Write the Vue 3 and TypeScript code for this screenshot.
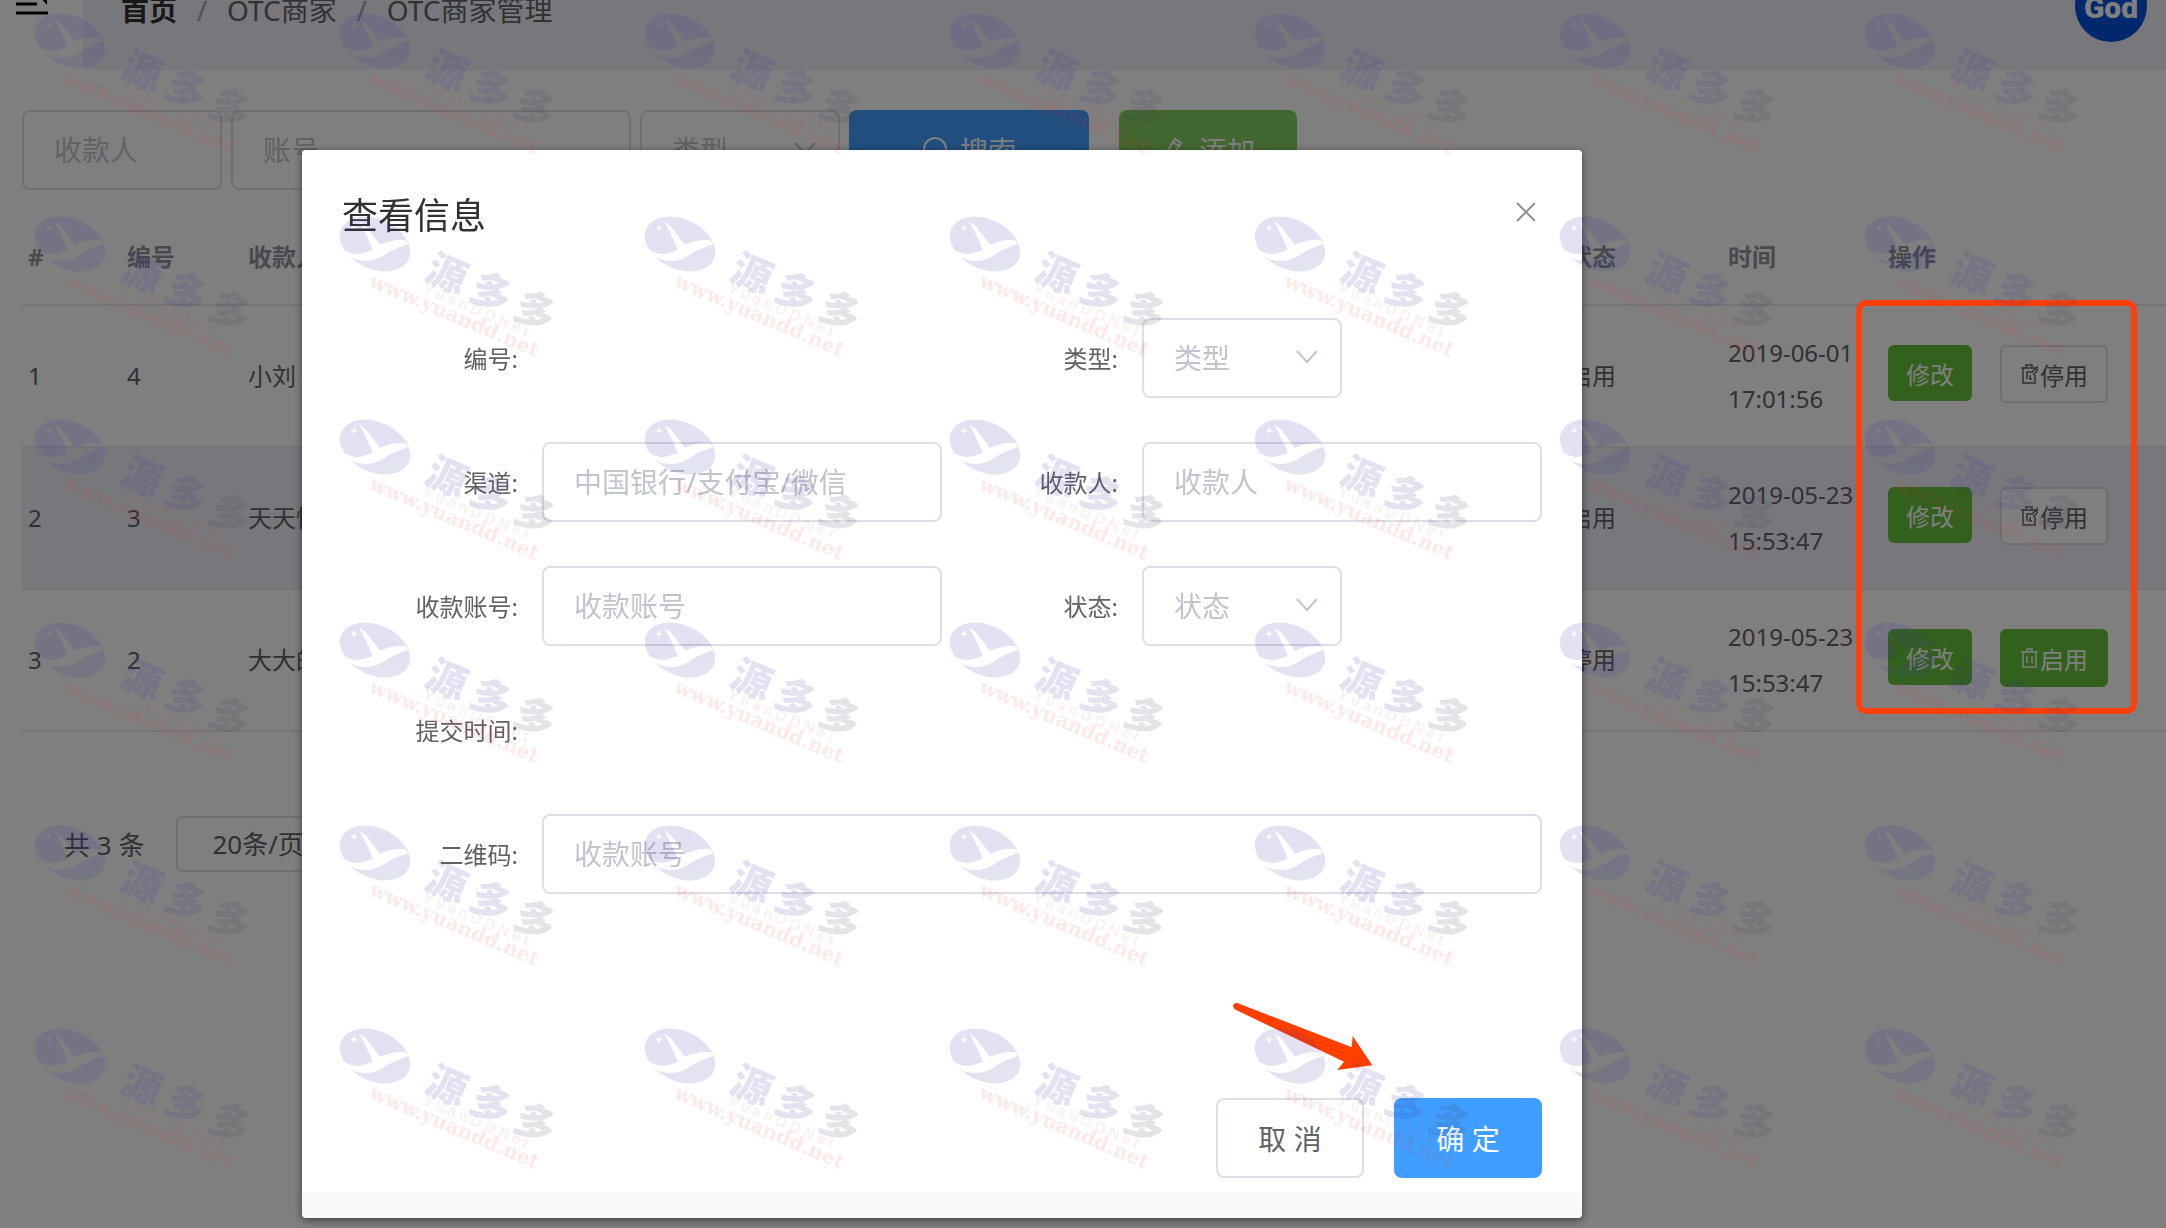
<script setup lang="ts">
import { ref } from 'vue'

interface Merchant {
  id: number
  payee: string
  enabled: boolean
  date: string
  time: string
}

const merchants: Merchant[] = [
  { id: 4, payee: '小刘', enabled: true, date: '2019-06-01', time: '17:01:56' },
  { id: 3, payee: '天天快', enabled: true, date: '2019-05-23', time: '15:53:47' },
  { id: 2, payee: '大大的', enabled: false, date: '2019-05-23', time: '15:53:47' },
]

const filter = ref({ payee: '', account: '' })
const form = ref({ channel: '', payee: '', account: '', qrcode: '' })

const tile = { width: 305, height: 203 }
const marks = Array.from({ length: 42 }, (_, i) => ({
  x: (i % 7) * tile.width,
  y: Math.floor(i / 7) * tile.height,
}))
</script>

<template>
  <div class="page">
    <header class="topbar">
      <button class="menu" type="button" aria-label="菜单">
        <svg width="32" height="28" viewBox="0 0 32 28">
          <path d="M0 4H32M0 14H21M0 23H32" stroke="#000" stroke-width="3" />
          <path d="M24 7L31 0V15Z" fill="#000" />
        </svg>
      </button>
      <div class="bar">
        <nav class="crumbs">
          <a href="#" class="home">首页</a><span class="sep">/</span>
          <span>OTC商家</span><span class="sep">/</span>
          <span>OTC商家管理</span>
        </nav>
        <div class="avatar">God</div>
      </div>
    </header>

    <main class="content">
      <form class="filters" @submit.prevent>
        <input v-model="filter.payee" class="field short" placeholder="收款人" aria-label="收款人" />
        <input v-model="filter.account" class="field long" placeholder="账号" aria-label="账号" />
        <div class="picker short">
          <select class="field" aria-label="类型"><option>类型</option></select>
          <svg class="chevron" width="22" height="14" viewBox="0 0 22 14"><path d="M1 1L11 12L21 1" /></svg>
        </div>
        <button class="btn search" type="submit">
          <svg width="28" height="28" viewBox="0 0 28 28"><circle cx="13" cy="13" r="11" /><path d="M21 21L27 27" /></svg>
          <span>搜索</span>
        </button>
        <button class="btn add" type="button">
          <svg width="28" height="28" viewBox="0 0 28 28"><path d="M5 17L14 3L20 7L11 21L4 24ZM12 6L18 10M3 27H24" /></svg>
          <span>添加</span>
        </button>
      </form>

      <table class="list">
        <colgroup>
          <col class="c-index" /><col class="c-id" /><col /><col class="c-mid" /><col class="c-mid" /><col class="c-ops" />
        </colgroup>
        <thead>
          <tr><th>#</th><th>编号</th><th>收款人</th><th>状态</th><th>时间</th><th>操作</th></tr>
        </thead>
        <tbody>
          <tr v-for="(m, i) in merchants" :key="m.id">
            <td>{{ i + 1 }}</td>
            <td>{{ m.id }}</td>
            <td>{{ m.payee }}</td>
            <td>{{ m.enabled ? '启用' : '停用' }}</td>
            <td>{{ m.date }} {{ m.time }}</td>
            <td>
              <div class="ops">
                <button class="mini edit" type="button">修改</button>
                <button class="mini toggle" :class="{ on: !m.enabled }" type="button">
                  <svg v-if="m.enabled" width="20" height="24" viewBox="0 0 20 24"><path d="M1 6H17M6 6V3H12V6M3 6V21H15V13M7 17V10H12L17 5V9L13 13M10 13V17H12" /></svg>
                  <svg v-else width="20" height="24" viewBox="0 0 20 24"><path d="M1 6H18M7 6V3H12V6M3 6V21H16V6M7 10V17M12 10V17" /></svg>
                  <span>{{ m.enabled ? '停用' : '启用' }}</span>
                </button>
              </div>
            </td>
          </tr>
        </tbody>
      </table>

      <div class="pager">
        <span>共 3 条</span>
        <select aria-label="每页条数"><option>20条/页</option></select>
      </div>
    </main>

    <div class="overlay">
      <section class="dialog" role="dialog" aria-labelledby="dialog-title">
        <header class="dialog-head">
          <h2 id="dialog-title">查看信息</h2>
          <button class="close" type="button" aria-label="关闭">
            <svg width="20" height="20" viewBox="0 0 20 20"><path d="M1 1L19 19M19 1L1 19" /></svg>
          </button>
        </header>
        <form id="info" class="info" @submit.prevent>
          <span class="label">编号:</span>
          <span></span>
          <label class="label" for="f-type">类型:</label>
          <div class="picker short">
            <select id="f-type" class="field"><option>类型</option></select>
            <svg class="chevron" width="22" height="14" viewBox="0 0 22 14"><path d="M1 1L11 12L21 1" /></svg>
          </div>
          <label class="label" for="f-channel">渠道:</label>
          <input id="f-channel" v-model="form.channel" class="field" placeholder="中国银行/支付宝/微信" />
          <label class="label" for="f-payee">收款人:</label>
          <input id="f-payee" v-model="form.payee" class="field" placeholder="收款人" />
          <label class="label" for="f-account">收款账号:</label>
          <input id="f-account" v-model="form.account" class="field" placeholder="收款账号" />
          <label class="label" for="f-status">状态:</label>
          <div class="picker short">
            <select id="f-status" class="field"><option>状态</option></select>
            <svg class="chevron" width="22" height="14" viewBox="0 0 22 14"><path d="M1 1L11 12L21 1" /></svg>
          </div>
          <span class="label row-start">提交时间:</span>
          <label class="label row-start" for="f-qr">二维码:</label>
          <input id="f-qr" v-model="form.qrcode" class="field wide" placeholder="收款账号" />
        </form>
        <footer class="dialog-foot">
          <button class="btn cancel" type="button">取 消</button>
          <button class="btn ok" type="submit" form="info">确 定</button>
        </footer>
        <svg class="arrow" width="144" height="72" viewBox="150 120 432 216">
          <path d="M170 128L515 262L518 228L577 316L472 330L492 305L164 148Q152 132 170 128Z" fill="#ff3f00" />
        </svg>
      </section>
    </div>

    <div class="highlight"></div>

    <svg class="watermark" aria-hidden="true">
      <defs>
        <linearGradient id="wm-fill" x1="0" y1="0" x2="1" y2="1">
          <stop offset="0.5" stop-color="#4326a8" />
          <stop offset="1" stop-color="#2c4f8c" />
        </linearGradient>
        <linearGradient id="wm-word" x1="0" y1="0" x2="1" y2="0">
          <stop offset="0.3" stop-color="#4030a0" />
          <stop offset="1" stop-color="#40444c" />
        </linearGradient>
        <mask id="wm-cut" maskUnits="userSpaceOnUse" x="0" y="0" width="305" height="203">
          <rect width="305" height="203" fill="#fff" />
          <g transform="translate(10 -13) scale(0.3333)" fill="#000">
            <path d="M133 95L152 108L195 164Q235 146 271 151L280 162Q240 174 205 197Q165 222 118 208Q95 196 84 178Q115 198 145 189L173 180Q166 156 133 95Z" />
            <path d="M119 102L121 110L128 113L120 116L116 124L114 116L107 112L115 110Z" />
          </g>
        </mask>
        <g id="wm">
          <g mask="url(#wm-cut)">
            <ellipse cx="70" cy="41" rx="37" ry="25" transform="rotate(25 70 41)" fill="url(#wm-fill)" opacity="0.14" />
          </g>
          <g transform="translate(118 76) rotate(23)">
            <text class="wm-name" x="0 48 96" fill="url(#wm-word)">源多多</text>
          </g>
          <g transform="translate(117 89) rotate(23)">
            <text class="wm-en">Y u a n D D   N e t</text>
          </g>
          <g transform="translate(63 83) rotate(23)">
            <text class="wm-url">www.yuandd.net</text>
          </g>
        </g>
      </defs>
      <use v-for="(m, i) in marks" :key="i" href="#wm" :x="m.x" :y="m.y" />
    </svg>
  </div>
</template>

<style>
body {
  background: #fff;
  overflow: hidden;
}
</style>

<style scoped>
* {
  box-sizing: border-box;
}
.page {
  position: relative;
  min-height: 100vh;
  overflow: hidden;
  font-family: "Noto Sans", "Noto Sans CJK SC", sans-serif;
  font-size: 24px;
  color: #606266;
}
button,
input,
select {
  font-family: inherit;
  margin: 0;
}
/* the page is scrolled a little, so the bar starts above the window */
.topbar {
  display: flex;
  height: 120px;
  margin-top: -50px;
}
.menu {
  width: 83px;
  padding: 0 0 12px 16px;
  border: 0;
  background: none;
  text-align: left;
}
.menu svg {
  display: block;
}
.bar {
  flex: 1;
  display: flex;
  align-items: center;
  justify-content: space-between;
  padding: 0 19px 0 38px;
  background: #f0f0f8;
}
.crumbs {
  display: flex;
  font-size: 28px;
  line-height: 40px;
}
.home {
  color: #303133;
  font-weight: 700;
  text-decoration: none;
}
.sep {
  width: 50px;
  text-align: center;
  color: #a0a4ae;
}
.avatar {
  width: 72px;
  height: 72px;
  margin-bottom: 8px;
  border-radius: 50%;
  background: #0050d8;
  color: #fff;
  font-family: Roboto, sans-serif;
  font-size: 30px;
  font-weight: 900;
  line-height: 76px;
  text-align: center;
}
.content {
  padding: 40px 0 0 22px;
}
.filters {
  display: flex;
}
.field {
  width: 100%;
  height: 80px;
  padding: 0 30px;
  border: 2px solid #dcdfe6;
  border-radius: 8px;
  background: #fff;
  font-size: 28px;
  color: #c0c4cc;
  outline: 0;
}
.field::placeholder {
  color: #c0c4cc;
  opacity: 1;
}
select {
  appearance: none;
}
.short {
  width: 200px;
}
.filters .short,
.filters .long {
  margin-right: 9px;
}
.filters .long {
  width: 400px;
}
.picker {
  position: relative;
}
.chevron {
  position: absolute;
  right: 24px;
  top: 32px;
  fill: none;
  stroke: #c0c4cc;
  stroke-width: 2;
}
.btn {
  display: flex;
  align-items: center;
  justify-content: center;
  gap: 10px;
  height: 80px;
  padding: 0;
  border: 0;
  border-radius: 8px;
  color: #fff;
  font-size: 28px;
}
.btn svg {
  fill: none;
  stroke: #fff;
  stroke-width: 2;
}
.search {
  width: 240px;
  margin-right: 30px;
  background: #409eff;
}
.add {
  width: 178px;
  background: #85ce61;
}
.list {
  width: 100%;
  margin-top: 20px;
  border-collapse: collapse;
  table-layout: fixed;
  line-height: 46px;
}
.c-index {
  width: 99px;
}
.c-id {
  width: 121px;
}
.c-mid {
  width: 160px;
}
.c-ops {
  width: 284px;
}
th,
td {
  padding: 24px 6px;
  border-bottom: 2px solid #e6e9f0;
  text-align: left;
}
th {
  color: #909399;
  font-weight: 700;
}
tbody tr:nth-child(2) {
  background: #f0f0f8;
}
.ops {
  display: flex;
  align-items: flex-start;
  gap: 28px;
  margin-bottom: 4px;
}
.mini {
  display: flex;
  align-items: center;
  justify-content: center;
  height: 56px;
  padding: 0;
  border: 0;
  border-radius: 6px;
  font-size: 24px;
}
.edit {
  width: 84px;
  background: #67c23a;
  color: #fff;
}
.toggle {
  width: 108px;
  height: 58px;
  border: 2px solid #dcdfe6;
  background: #fff;
  color: #606266;
}
.toggle.on {
  border-color: #67c23a;
  background: #67c23a;
  color: #fff;
}
.toggle svg {
  fill: none;
  stroke: currentColor;
  stroke-width: 1.5;
}
.pager {
  display: flex;
  align-items: center;
  gap: 32px;
  margin: 84px 0 0 42px;
  font-size: 26px;
}
.pager select {
  width: 220px;
  height: 56px;
  padding: 0 34px;
  border: 2px solid #dcdfe6;
  border-radius: 6px;
  background: #fff;
  color: #606266;
  font-size: 26px;
}
.overlay {
  position: fixed;
  inset: 0;
  padding: 150px 584px 0 302px;
  background: rgba(0, 0, 0, 0.5);
}
.dialog {
  position: relative;
  border-radius: 4px;
  border-bottom: 26px solid #fafafa;
  background: #fff;
  box-shadow: 0 2px 8px rgba(0, 0, 0, 0.5);
}
.dialog-head {
  display: flex;
  align-items: center;
  justify-content: space-between;
  padding: 42px 46px 38px 40px;
}
.dialog-head h2 {
  margin: 0;
  font-size: 36px;
  font-weight: 400;
  line-height: 48px;
  color: #303133;
}
.close {
  height: 20px;
  margin-bottom: 8px;
  padding: 0;
  border: 0;
  background: none;
}
.close svg {
  display: block;
  fill: none;
  stroke: #909399;
  stroke-width: 2;
}
.info {
  display: grid;
  grid-template-columns: 200px 1fr 200px 1fr;
  grid-auto-rows: 80px;
  row-gap: 44px;
  padding: 40px 40px 204px;
}
.label {
  padding-right: 24px;
  line-height: 82px;
  text-align: right;
}
.row-start {
  grid-column: 1;
}
.wide {
  grid-column: 2 / -1;
}
.dialog-foot {
  display: flex;
  justify-content: flex-end;
  gap: 30px;
  padding: 0 40px 14px;
}
.dialog-foot .btn {
  width: 148px;
}
.cancel {
  border: 2px solid #dcdfe6;
  background: #fff;
  color: #606266;
}
.ok {
  background: #409eff;
}
.arrow {
  position: absolute;
  right: 208px;
  bottom: 120px;
}
.highlight {
  position: absolute;
  top: 300px;
  right: 29px;
  width: 281px;
  height: 414px;
  border: 6px solid #fc3f0b;
  border-radius: 10px;
}
.watermark {
  position: absolute;
  inset: 0;
  width: 100%;
  height: 100%;
  pointer-events: none;
}
.wm-name {
  font-family: "Noto Sans CJK SC", sans-serif;
  font-size: 40px;
  font-weight: 900;
  opacity: 0.14;
}
.wm-en {
  font-family: "Liberation Sans", sans-serif;
  font-size: 15px;
  fill: #e04040;
  opacity: 0.1;
  white-space: pre;
}
.wm-url {
  font-family: "DejaVu Serif", serif;
  font-size: 20px;
  font-weight: 700;
  fill: #f03030;
  opacity: 0.11;
}
</style>
